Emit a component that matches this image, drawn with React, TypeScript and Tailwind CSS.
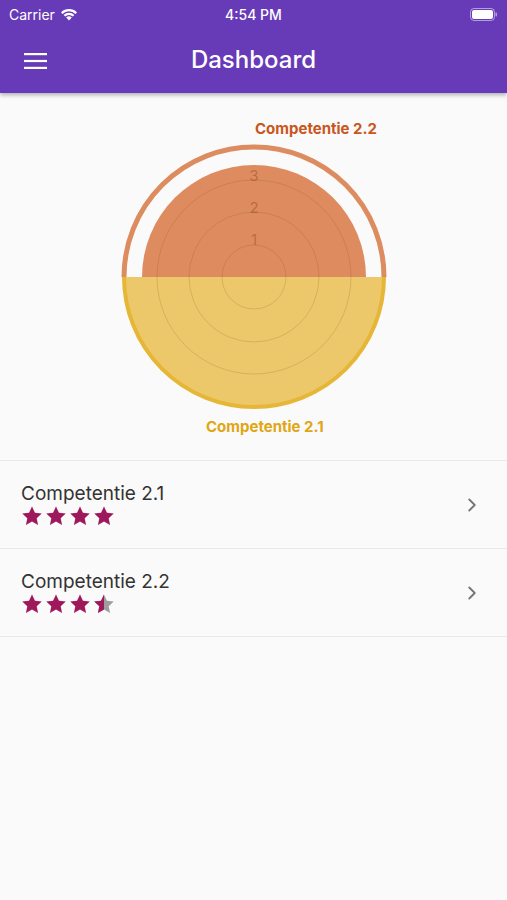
import { ChevronRight } from "lucide-react";

const STAR =
  "M12 2.5l2.94 6.26 6.81.78-5.06 4.64 1.38 6.72L12 17.5l-6.07 3.4 1.38-6.72-5.06-4.64 6.81-.78z";

function Star({ fill }: { fill: "full" | "half" }) {
  return (
    <svg width="24" height="24" viewBox="0 0 24 24">
      <defs>
        <clipPath id="half-left">
          <rect x="0" y="0" width="12" height="24" />
        </clipPath>
      </defs>
      {fill === "full" ? (
        <path d={STAR} fill="#a0185c" />
      ) : (
        <>
          <path d={STAR} fill="#9e9e9e" />
          <path d={STAR} fill="#a0185c" clipPath="url(#half-left)" />
        </>
      )}
    </svg>
  );
}

function StatusBar() {
  return (
    <div className="relative flex h-[28px] items-center justify-between px-[9px] text-[14px] text-white">
      <div className="flex items-center gap-[5px]">
        <span>Carrier</span>
        <svg width="18" height="13" viewBox="0 0 18 13">
          <path d="M9 12.5L6.2 9.6a4 4 0 015.6 0z" fill="white" />
          <path d="M3.6 7a7.6 7.6 0 0110.8 0l-1.6 1.6a5.4 5.4 0 00-7.6 0z" fill="white" />
          <path d="M1 4.4a11.3 11.3 0 0116 0l-1.6 1.6a9 9 0 00-12.8 0z" fill="white" />
        </svg>
      </div>
      <span className="absolute left-1/2 -translate-x-1/2 font-medium">4:54 PM</span>
      <svg width="28" height="13" viewBox="0 0 28 13">
        <rect x="0.5" y="0.5" width="24" height="12" rx="3.5" fill="none" stroke="rgba(255,255,255,0.5)" />
        <rect x="2" y="2" width="21" height="9" rx="2" fill="white" />
        <rect x="25.5" y="4.5" width="1.5" height="4" rx="0.7" fill="rgba(255,255,255,0.5)" />
      </svg>
    </div>
  );
}

function Chart() {
  const cx = 254;
  const cy = 184;
  return (
    <svg width="507" height="367" viewBox="0 0 507 367" className="block">
      {/* Competentie 2.2 (value 3.5) */}
      <path d={`M${cx - 130} ${cy} A130 130 0 0 1 ${cx + 130} ${cy}`} fill="none" stroke="#dc8c5e" strokeWidth="5" />
      <path d={`M${cx - 112} ${cy} A112 112 0 0 1 ${cx + 112} ${cy} Z`} fill="#df8b60" />
      {/* Competentie 2.1 (value 4) */}
      <path d={`M${cx - 131} ${cy} A131 131 0 0 0 ${cx + 131} ${cy} Z`} fill="#edc86a" />
      <path d={`M${cx - 130} ${cy} A130 130 0 0 0 ${cx + 130} ${cy}`} fill="none" stroke="#e6b637" strokeWidth="4" />
      {/* grid */}
      {[32, 65, 97].map((r) => (
        <circle key={r} cx={cx} cy={cy} r={r} fill="none" stroke="rgba(120,80,40,0.2)" strokeWidth="1" />
      ))}
      <g fontFamily="Inter, 'Liberation Sans', sans-serif" fontSize="15" fill="rgba(140,80,40,0.5)" textAnchor="middle">
        <text x={cx} y={cy - 32}>1</text>
        <text x={cx} y={cy - 64}>2</text>
        <text x={cx} y={cy - 96}>3</text>
      </g>
      <g fontFamily="Inter, 'Liberation Sans', sans-serif" fontSize="15" fontWeight="700">
        <text x="255" y="41" fill="#c9561c">Competentie 2.2</text>
        <text x="206" y="339" fill="#e0a614">Competentie 2.1</text>
      </g>
    </svg>
  );
}

function Item({ title, half }: { title: string; half?: boolean }) {
  return (
    <div className="flex h-[88px] items-center border-b border-[#e9e9e9] pl-[21px] pr-[24px]">
      <div className="flex-1">
        <div className="text-[19px] leading-[24px] text-[#333]">{title}</div>
        <div className="-mt-[2px] -ml-[1px] flex">
          <Star fill="full" />
          <Star fill="full" />
          <Star fill="full" />
          <Star fill={half ? "half" : "full"} />
        </div>
      </div>
      <ChevronRight size={22} color="#757575" strokeWidth={2} />
    </div>
  );
}

export default function App() {
  return (
    <div className="min-h-[900px] w-[507px] bg-[#fafafa]" style={{ fontFamily: "Inter, 'Liberation Sans', sans-serif" }}>
      <header className="relative z-10 bg-[#673ab7] shadow-[0_2px_4px_rgba(0,0,0,0.3)]">
        <StatusBar />
        <div className="relative flex h-[65px] items-center px-[24px]">
          <svg width="23" height="16" viewBox="0 0 23 16">
            <rect x="0" y="0" width="23" height="2.2" fill="white" />
            <rect x="0" y="6.9" width="23" height="2.2" fill="white" />
            <rect x="0" y="13.8" width="23" height="2.2" fill="white" />
          </svg>
          <h1 className="absolute left-1/2 top-[17px] -translate-x-1/2 text-[24px] font-medium leading-[30px] text-white">Dashboard</h1>
        </div>
      </header>
      <Chart />
      <div className="border-t border-[#e9e9e9]">
        <Item title="Competentie 2.1" />
        <Item title="Competentie 2.2" half />
      </div>
    </div>
  );
}
